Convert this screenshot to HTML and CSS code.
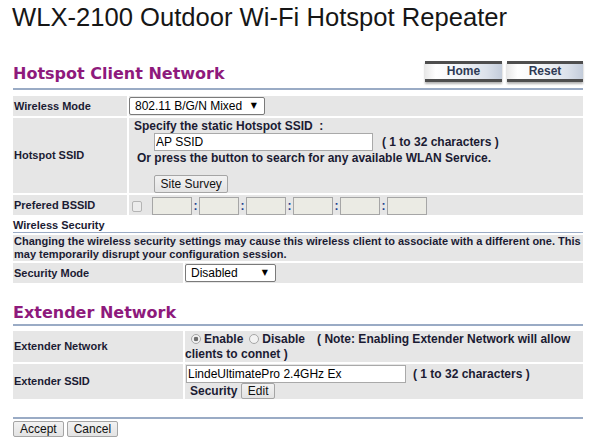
FILE: index.html
```html
<!DOCTYPE html>
<html>
<head>
<meta charset="utf-8">
<title>WLX-2100 Outdoor Wi-Fi Hotspot Repeater</title>
<link rel="stylesheet" href="styles.css">
</head>
<body>
<div class="page">
  <h1 class="title">WLX-2100 Outdoor Wi-Fi Hotspot Repeater</h1>

  <div class="section-head section-head--nav">
    <h2 class="section-title">Hotspot Client Network</h2>
    <div class="nav">
      <a class="nav-btn nav-btn--home">Home</a>
      <a class="nav-btn nav-btn--reset">Reset</a>
    </div>
  </div>

  <div class="form form--client">
    <div class="label">Wireless Mode</div>
    <div class="value value--mode">
      <span class="select select--mode"><select><option>802.11 B/G/N Mixed</option></select></span>
    </div>

    <div class="label">Hotspot SSID</div>
    <div class="value value--ssid">
      <div class="line line--specify">Specify the static Hotspot SSID&nbsp; :</div>
      <div class="line line--input">
        <input class="text text--ssid" type="text" value="AP SSID">
        <span class="hint hint--ssid">( 1 to 32 characters )</span>
      </div>
      <div class="line line--press">Or press the button to search for any available WLAN Service.</div>
      <div class="line line--button"><button class="btn btn--survey" type="button">Site Survey</button></div>
    </div>

    <div class="label">Prefered BSSID</div>
    <div class="value value--bssid">
      <input type="checkbox" class="check" disabled>
      <input class="mac" disabled><span class="colon">:</span><input class="mac" disabled><span class="colon">:</span><input class="mac" disabled><span class="colon">:</span><input class="mac" disabled><span class="colon">:</span><input class="mac" disabled><span class="colon">:</span><input class="mac" disabled>
    </div>
  </div>

  <div class="subhead">Wireless Security</div>

  <div class="form form--security">
    <div class="value value--desc">Changing the wireless security settings may cause this wireless client to associate with a different one. This<br>may temporarily disrupt your configuration session.</div>
    <div class="label">Security Mode</div>
    <div class="value value--mode">
      <span class="select select--security"><select><option>Disabled</option></select></span>
    </div>
  </div>

  <div class="section-head section-head--ext">
    <h2 class="section-title">Extender Network</h2>
  </div>

  <div class="form form--ext">
    <div class="label">Extender Network</div>
    <div class="value value--radio">
      <input type="radio" name="ext" class="radio radio--first" checked>Enable<input type="radio" name="ext" class="radio">Disable<span class="note">( Note: Enabling Extender Network will allow</span><br>clients to connet )
    </div>

    <div class="label">Extender SSID</div>
    <div class="value value--extssid">
      <div class="line line--extinput">
        <input class="text text--ext" type="text" value="LindeUltimatePro 2.4GHz Ex">
        <span class="hint hint--ext">( 1 to 32 characters )</span>
      </div>
      <div class="line line--security">
        <span class="sec-label">Security</span><button class="btn btn--edit" type="button">Edit</button>
      </div>
    </div>
  </div>

  <div class="footer">
    <button class="btn" type="button">Accept</button>
    <button class="btn" type="button">Cancel</button>
  </div>
</div>
</body>
</html>
```

FILE: styles.css
```css
* { box-sizing: border-box; }

body {
  margin: 0;
  background: #fff;
  font-family: "Liberation Sans", Arial, sans-serif;
  color: #1b1b33;
}

.page {
  width: 570px;
  margin-left: 13px;
}

.title {
  margin: 2px 0 0 -1px;
  font: normal 25.6px/30px "Liberation Sans", Arial, sans-serif;
  color: #161616;
  white-space: nowrap;
}

/* section headers */
.section-head {
  display: flex;
  justify-content: space-between;
  align-items: flex-start;
  border-bottom: 2px solid #9aabc5;
}
.section-head--nav { margin-top: 29px; padding-bottom: 4px; }
.section-head--ext { margin-top: 20px; padding-bottom: 1px; }

.section-title {
  margin: 3px 0 0;
  font: bold 16px/20px "DejaVu Sans", Verdana, sans-serif;
  color: #8e1a7c;
}
.section-head--ext .section-title { margin-top: 0; }

.nav { display: flex; gap: 5px; }
.nav-btn {
  display: block;
  width: 76px;
  height: 21px;
  border-top: 3px solid #4e4e4e;
  border-bottom: 3px solid #4e4e4e;
  background: linear-gradient(to right, #e9e9e9 0%, #ffffff 14%, #f3f5f8 45%, #dbe1ea 80%, #c3ccda 100%);
  box-shadow: 0 2px 2px rgba(0, 0, 0, 0.3);
  font: bold 12px/15px "Liberation Sans", Arial, sans-serif;
  color: #2e3a55;
  text-align: center;
}
.nav-btn--home { width: 77px; }

/* grid tables */
.form {
  display: grid;
  gap: 2px;
}
.form--client { grid-template-columns: 114px 1fr; margin-top: 6px; }
.form--security { grid-template-columns: 170px 1fr; margin-top: 2px; }
.form--ext { grid-template-columns: 170px 1fr; margin-top: 5px; }

.label {
  background: #e6e6e6;
  display: flex;
  align-items: center;
  padding-left: 1px;
  font: bold 11px/13px "Liberation Sans", Arial, sans-serif;
}

.value {
  background: #e6e6e6;
  font: bold 12px/14px "Liberation Sans", Arial, sans-serif;
}

.value--mode { padding: 1px 0; }

.value--ssid { padding-top: 1px; }
.line--specify { padding-left: 5px; height: 14px; }
.line--input { display: flex; align-items: center; height: 18px; padding-left: 25px; }
.line--press { padding-left: 8px; height: 14px; }
.line--button { margin-top: 10px; padding-left: 25px; height: 18px; }

.value--bssid {
  display: flex;
  align-items: center;
  padding: 2px 0 0 3px;
}

.value--desc {
  grid-column: 1 / -1;
  padding: 0 1px;
  font-size: 11px;
  line-height: 13px;
  white-space: nowrap;
}

.value--radio {
  padding: 1px 0 0 0;
  line-height: 15px;
  white-space: nowrap;
}

.value--extssid { padding-top: 1px; }
.line--extinput { display: flex; align-items: center; height: 18px; padding-left: 1px; }
.line--security { display: flex; align-items: center; height: 16px; padding-left: 5px; }
.sec-label { margin-right: 4px; }

/* controls */
.select { position: relative; display: inline-block; vertical-align: top; }
.select select {
  -webkit-appearance: none;
  appearance: none;
  display: block;
  height: 18px;
  margin: 0;
  border: 1px solid #7a7a7a;
  border-radius: 2px;
  background: #fff;
  padding: 0 0 0 5px;
  font: 12px "Liberation Sans", Arial, sans-serif;
  color: #000;
}
.select::after {
  content: "\25BC";
  position: absolute;
  right: 8px;
  top: 4px;
  font: 8px/10px "DejaVu Sans", sans-serif;
  color: #000;
  pointer-events: none;
}
.select--mode select { width: 136px; }
.select--security select { width: 91px; }

.text {
  height: 18px;
  margin: 0;
  border: 1px solid #a9a9a9;
  background: #fff;
  padding: 0 1px;
  font: 12px "Liberation Sans", Arial, sans-serif;
  color: #000;
}
.text--ssid { width: 219px; }
.text--ext { width: 220px; }
.hint--ssid { margin-left: 9px; }
.hint--ext { margin-left: 7px; }

.btn {
  height: 18px;
  margin: 0;
  padding: 0 5.5px;
  border: 1px solid #a5a5a5;
  border-radius: 2px;
  background: linear-gradient(#f2f2f2, #e3e3e3);
  font: 12px/14px "Liberation Sans", Arial, sans-serif;
  color: #111;
}
.btn--edit { height: 16px; }

.check {
  -webkit-appearance: none;
  appearance: none;
  width: 10px;
  height: 11px;
  margin: 0 10px 0 0;
  border: 1px solid #b4b4b4;
  border-radius: 2px;
  background: #ececec;
}

.mac {
  width: 40px;
  height: 18px;
  margin: 0;
  border: 1px solid #a6a6a6;
  background: #ebebe4;
  padding: 0;
}
.colon {
  width: 4px;
  margin: 0 1.5px;
  color: #24408e;
  font-weight: bold;
  text-align: center;
}

.radio {
  -webkit-appearance: none;
  appearance: none;
  width: 10px;
  height: 10px;
  margin: 0 3px 0 6px;
  vertical-align: -1px;
  border: 1px solid #a6a6a6;
  border-radius: 50%;
  background: #f2f2f2;
}
.radio:checked {
  background: radial-gradient(circle, #6e6e6e 0 2px, #f2f2f2 2.6px);
}
.radio--first { margin-left: 6px; }
.note { margin-left: 12px; }

.subhead {
  margin-top: 4px;
  font: bold 11px/13px "Liberation Sans", Arial, sans-serif;
  border-bottom: 1px solid #9aabc5;
}

.footer {
  display: flex;
  gap: 3px;
  margin-top: 18px;
  padding-top: 2px;
  border-top: 2px solid #9aabc5;
}
.footer .btn { height: 16px; padding: 0 6px; }
```
